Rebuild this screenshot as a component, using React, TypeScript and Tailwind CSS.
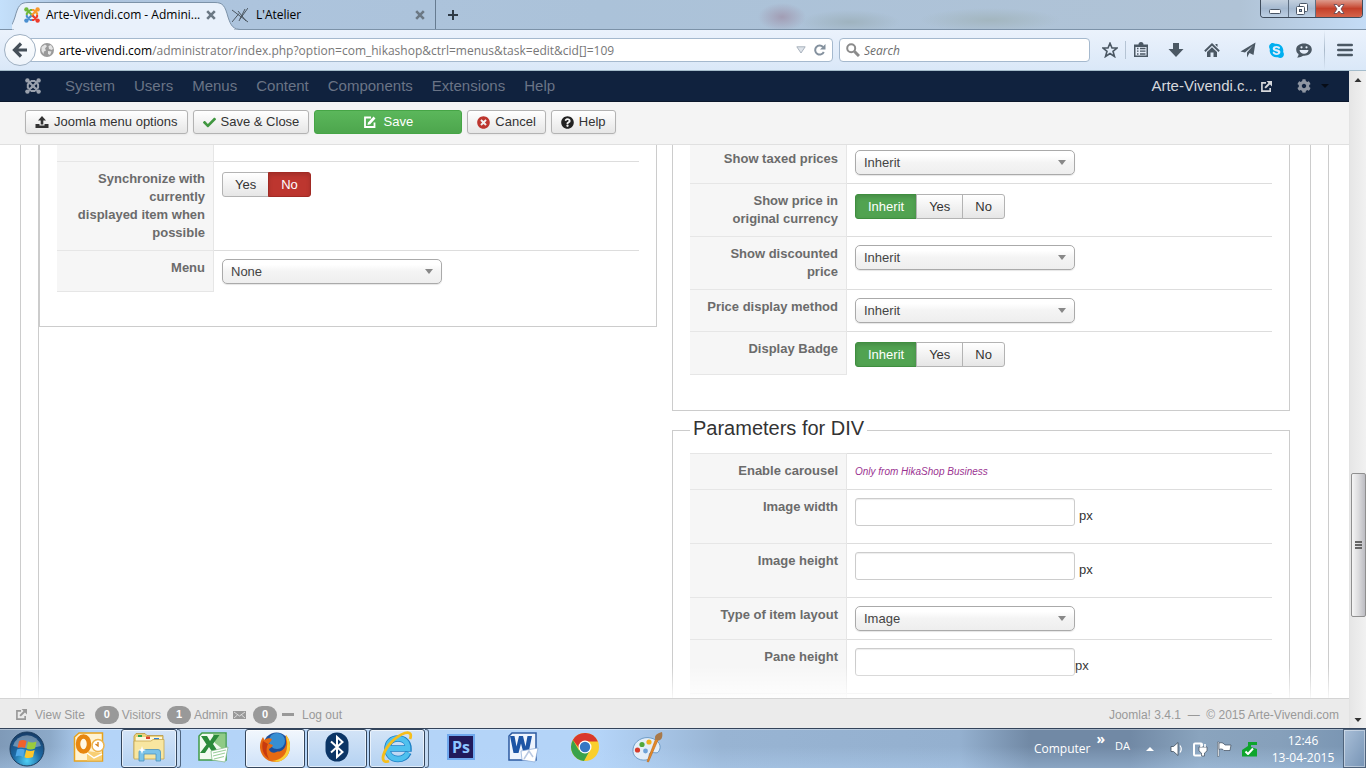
import { useId, useState } from "react";
import type { ReactNode } from "react";
import { FaCheck, FaCog, FaQuestionCircle, FaSkype, FaTimesCircle } from "react-icons/fa";

const menuItems = ["System", "Users", "Menus", "Content", "Components", "Extensions", "Help"];

export default function App() {
  return (
    <div className="flex h-screen flex-col overflow-hidden bg-white font-['Liberation_Sans',Arial,sans-serif] text-[13px] leading-[18px] text-[#333]">
      <TabStrip />
      <BrowserToolbar />
      <div className="flex min-h-0 flex-1">
        <div className="flex min-w-0 flex-1 flex-col">
          <AdminNav />
          <AdminToolbar />
          <MenuForm />
          <StatusBar />
        </div>
        <ScrollTrack />
      </div>
      <Taskbar />
    </div>
  );
}

/* ---------- browser ---------- */

function TabStrip() {
  return (
    <div className="relative flex h-[30px] shrink-0 items-end border-b border-[#7c92a8] bg-[radial-gradient(ellipse_24px_14px_at_782px_17px,#a29db4_0%,transparent_100%),radial-gradient(ellipse_50px_12px_at_850px_22px,#9fb3bf_0%,transparent_100%),radial-gradient(ellipse_70px_12px_at_990px_20px,#a3b6bf_0%,transparent_100%),linear-gradient(90deg,#c4e0fb_0px,#aec5df_70px,#abc2d9_600px,#b0c3d6_1240px,#c4dcf6_100%)] font-['Open_Sans','Noto_Sans',sans-serif] text-xs text-black">
      <div className="relative ml-3 flex h-[30px] w-[220px] items-center">
        <svg className="absolute -bottom-px left-0 h-[29px] w-[228px]" viewBox="0 0 228 29" fill="none">
          <path
            d="M-12 28.500C-2 28.500 0 25 3 16C6 5 8 1.500 16 1.500H203C211 1.500 213 5 216 16C219 25 221 28.500 230 28.500"
            fill="#e9f1fb"
            stroke="#7c92a8"
          />
          <path d="M2 28.500H222" stroke="#e9f1fb" strokeWidth="2" />
        </svg>
        <div className="relative flex w-full items-center pt-0.5 pr-3 pl-3">
          <JoomlaMark />
          <span className="ml-1.5 flex-1 whitespace-nowrap">Arte-Vivendi.com - Admini...</span>
          <button aria-label="Close tab Arte-Vivendi.com" className="mr-1">
            <CloseX />
          </button>
        </div>
      </div>
      <div className="flex h-[30px] w-[204px] items-center border-r border-[#667b90] pt-0.5 pr-2.5">
        <svg className="h-4 w-4" viewBox="0 0 16 16" fill="none" stroke="#4b5660" strokeWidth="1">
          <path d="M0 3L8 9L16 15M0 15L7 6.500M6 4L14 14M8 12L16 1M13 2L7 14" />
        </svg>
        <span className="ml-2 flex-1">L'Atelier</span>
        <button aria-label="Close tab L'Atelier">
          <CloseX />
        </button>
      </div>
      <button aria-label="New tab" className="flex h-[30px] w-[34px] items-center justify-center pt-0.5">
        <svg className="h-3 w-3" viewBox="0 0 12 12" stroke="#2e3a46" strokeWidth="2">
          <path d="M6 1V11M1 6H11" />
        </svg>
      </button>

      <div className="absolute top-0 right-[3px] flex h-[18px] overflow-hidden rounded-b border border-t-0 border-[#3f4c5c]">
        <button aria-label="Minimize" className="flex w-7 items-center justify-center border-r border-[#5f6f82] bg-linear-to-b from-[#c3d0de] via-[#a5b9d0] to-[#bdd0e4]">
          <svg className="h-3 w-3" viewBox="0 0 12 12">
            <rect x="0.500" y="6.500" width="11" height="4" rx="1" fill="#fff" stroke="#4a5666" />
          </svg>
        </button>
        <button aria-label="Restore" className="flex w-[27px] items-center justify-center border-r border-[#5f6f82] bg-linear-to-b from-[#c3d0de] via-[#a5b9d0] to-[#bdd0e4]">
          <svg className="h-3 w-3" viewBox="0 0 12 12" fill="#fff" stroke="#4a5666">
            <rect x="3.500" y="0.500" width="8" height="8" rx="1" />
            <rect x="0.500" y="3.500" width="8" height="8" rx="1" />
            <rect x="3.500" y="6.500" width="2" height="2" fill="#a5b9d0" />
          </svg>
        </button>
        <button aria-label="Close" className="flex w-[46px] items-center justify-center bg-linear-to-b from-[#dd9a8c] via-[#c4402a] to-[#d5634a]">
          <svg className="h-3 w-3" viewBox="0 0 12 12">
            <path d="M1 1.500H4L6 4L8 1.500H11L8 6L11 10.500H8L6 8L4 10.500H1L4 6Z" fill="#fff" stroke="#5a4350" strokeWidth="0.800" />
          </svg>
        </button>
      </div>
    </div>
  );
}

function CloseX() {
  return (
    <svg className="h-2.5 w-2.5" viewBox="0 0 10 10" stroke="#6b7884" strokeWidth="2.600">
      <path d="M1.200 1.200L8.800 8.800M8.800 1.200L1.200 8.800" />
    </svg>
  );
}

function JoomlaMark({ mono }: { mono?: boolean }) {
  const [green, orange, red, blue] = mono
    ? ["currentColor", "currentColor", "currentColor", "currentColor"]
    : ["#6fb83a", "#f8982a", "#ee3b2a", "#4a8fd0"];
  return (
    <svg className="h-4 w-4 shrink-0" viewBox="0 0 16 16" fill="none" strokeWidth="2">
      <path d="M2.500 2.500L10 10M2.800 8V6.500L6.500 2.900H8" stroke={green} />
      <path d="M13.500 2.500L6 10M8 2.900H9.500L13.100 6.500V8" stroke={orange} />
      <path d="M13.500 13.500L8.500 8.500M13.100 8V9.500L9.500 13.100H8" stroke={red} />
      <path d="M2.500 13.500L7.500 8.500M8 13.100H6.500L2.800 9.500V8" stroke={blue} />
      <circle cx="2.400" cy="2.400" r="2.200" fill={green} />
      <circle cx="13.600" cy="2.400" r="2.200" fill={orange} />
      <circle cx="13.600" cy="13.600" r="2.200" fill={red} />
      <circle cx="2.400" cy="13.600" r="2.200" fill={blue} />
    </svg>
  );
}

function BrowserToolbar() {
  return (
    <div className="flex h-[41px] shrink-0 items-center border-b border-[#a4bccb] bg-linear-to-b from-[#ebf2fc] to-[#dae8f8] pl-1 font-['Open_Sans','Noto_Sans',sans-serif] text-xs">
      <button aria-label="Back" className="z-10 flex h-8 w-8 shrink-0 items-center justify-center rounded-full border border-[#9fb0c2] bg-linear-to-b from-white to-[#edf3fa]">
        <svg className="h-4 w-4" viewBox="0 0 16 16" fill="none" stroke="#454f59" strokeWidth="3.200">
          <path d="M9 1.500L2.500 8L9 14.500M3 8H15" />
        </svg>
      </button>
      <div className="-ml-1.5 flex h-6 flex-1 items-center rounded-r-sm border border-[#a5b9ce] bg-white pr-1.5 pl-[9px]">
        <svg className="h-3.5 w-3.5 shrink-0" viewBox="0 0 14 14">
          <circle cx="7" cy="7" r="7" fill="#9a9a9a" />
          <path d="M1.500 4L5 1.500L7 3L5 5.500L6 7.500L4 8.500L3.500 11L1.500 8ZM8.500 3L11 2L13 5.500L12 7L9 6ZM8 8L11.500 8.500L10 12L8 11Z" fill="#e4e4e4" />
        </svg>
        <div className="ml-[5px] flex-1 pt-0.5 leading-5 whitespace-nowrap">
          <span className="text-black">arte-vivendi.com</span>
          <span className="text-[#777]">/administrator/index.php?option=com_hikashop&amp;ctrl=menus&amp;task=edit&amp;cid[]=109</span>
        </div>
        <svg className="h-2 w-2.5" viewBox="0 0 10 8">
          <path d="M0.800 0.800H9.200L5 7Z" fill="#dfe4ea" stroke="#a9b2bd" />
        </svg>
        <button aria-label="Reload" className="ml-2">
          <svg className="h-3 w-3" viewBox="0 0 12 12" fill="none" stroke="#84919e" strokeWidth="2">
            <path d="M9.800 8A4.500 4.500 0 1 1 9 3" />
            <path d="M11.500 0V5.500H6Z" fill="#84919e" stroke="none" />
          </svg>
        </button>
      </div>
      <label className="ml-1.5 flex h-6 w-[251px] shrink-0 items-center rounded-sm border border-[#a5b9ce] bg-white pl-1.5">
        <svg className="h-3.5 w-3.5" viewBox="0 0 14 14" fill="none" stroke="#8b8b8b">
          <circle cx="5.200" cy="5.200" r="4" strokeWidth="2" />
          <path d="M8.500 8.500L13 13" strokeWidth="3" />
        </svg>
        <input aria-label="Search" placeholder="Search" className="ml-1 min-w-0 flex-1 pt-0.5 italic outline-none placeholder:text-[#6d6d6d]" />
      </label>
      <div className="flex h-full shrink-0 items-center pr-px text-[#4b5864]">
        <ToolbarButton label="Bookmark" className="ml-3">
          <path d="M8 1.200L10 6H15L11 9.300L12.500 14.500L8 11.500L3.500 14.500L5 9.300L1 6H6Z" fill="none" stroke="currentColor" strokeWidth="1.600" />
        </ToolbarButton>
        <div className="ml-[7px] h-[18px] w-px bg-[#b5c4d4]" />
        <ToolbarButton label="Bookmarks list" className="ml-[7px]">
          <path d="M5.500 2.500A2.500 2.500 0 0 1 10.500 2.500H15V15H1V2.500Z" />
          <path d="M2.500 5H13.500V13.500H2.500Z" fill="#e6eefa" />
          <path d="M4 6.500H5.500M7 6.500H12.500M4 9.200H5.500M7 9.200H12.500M4 12H5.500M7 12H12.500" stroke="currentColor" strokeWidth="1.300" />
        </ToolbarButton>
        <ToolbarButton label="Downloads" className="ml-[19px]">
          <path d="M5 1H11V7H15.500L8 15L0.500 7H5Z" />
        </ToolbarButton>
        <ToolbarButton label="Home" className="ml-5">
          <path d="M8 1L15.800 8.500L14.500 9.900L8 3.800L1.500 9.900L0.200 8.500ZM8 5.300L13 10V15H9.500V10.500H6.500V15H3V10ZM11.500 2H13.500V5L11.500 3Z" />
        </ToolbarButton>
        <ToolbarButton label="Share page" className="ml-5">
          <path d="M15.500 0.500L13.500 13L9.500 11L7 15.500V10.500L13 3.500L5 10.500L0.500 9.500Z" />
        </ToolbarButton>
        <button aria-label="Skype" className="ml-3 text-[#00aff0]">
          <FaSkype size={17} />
        </button>
        <ToolbarButton label="Hello" className="ml-[11px]">
          <path d="M8 1.500C12.500 1.500 15.800 4 15.800 7.500S12.500 13.700 8.500 13.700C6 13.700 5 15.500 1 15.500C2.500 14 2.500 13 2.500 12C1 11 0.200 9.500 0.200 7.500C0.200 4 3.500 1.500 8 1.500Z" />
          <path d="M3.500 8H12.500C12 10.500 10.500 11.700 8 11.700S4 10.500 3.500 8Z" fill="#e6eefa" />
          <circle cx="5.500" cy="5.300" r="1.100" fill="#e6eefa" />
          <circle cx="10.500" cy="5.300" r="1.100" fill="#e6eefa" />
        </ToolbarButton>
        <div className="ml-3 h-full w-px bg-linear-to-b from-transparent via-[#a9b9ca] to-transparent" />
        <button aria-label="Open menu" className="mr-3 ml-3">
          <svg className="h-4 w-4" viewBox="0 0 16 16" stroke="currentColor" strokeWidth="2.400" strokeLinecap="round">
            <path d="M1.200 3H14.800M1.200 8H14.800M1.200 13H14.800" />
          </svg>
        </button>
      </div>
    </div>
  );
}

function ToolbarButton({ label, className, children }: { label: string; className: string; children: ReactNode }) {
  return (
    <button aria-label={label} className={className}>
      <svg className="h-4 w-4" viewBox="0 0 16 16" fill="currentColor">
        {children}
      </svg>
    </button>
  );
}

function ScrollTrack() {
  return (
    <div className="flex w-[17px] shrink-0 flex-col items-center border-l border-[#e3e3e3] bg-linear-to-r from-[#e6e6e6] to-[#f1f1f1]">
      <div className="flex h-[17px] items-center">
        <svg className="h-1 w-2" viewBox="0 0 8 4">
          <path d="M4 0L7.500 4H0.500Z" fill="#333" />
        </svg>
      </div>
      <div className="flex-[385]" />
      <div className="flex min-h-[144px] w-[15px] flex-col items-center justify-center gap-px rounded-xs border border-[#8f8f8f] bg-linear-to-r from-[#f5f5f5] via-[#dcdcde] to-[#bcbcc2]">
        <span className="h-0.5 w-[7px] bg-[#666]" />
        <span className="h-0.5 w-[7px] bg-[#666]" />
        <span className="h-0.5 w-[7px] bg-[#666]" />
      </div>
      <div className="flex-[94]" />
      <div className="flex h-[17px] items-center">
        <svg className="h-1 w-2" viewBox="0 0 8 4">
          <path d="M4 4L7.500 0H0.500Z" fill="#333" />
        </svg>
      </div>
    </div>
  );
}

/* ---------- admin page ---------- */

function AdminNav() {
  return (
    <nav className="flex h-[31px] shrink-0 items-center border-b border-[#0b172c] bg-[#10223e] pl-[25px] text-[15px] text-[#6a7486]">
      <a href="#" aria-label="Control panel" className="text-[#9aa1ad]">
        <JoomlaMark mono />
      </a>
      <ul className="ml-[15px] flex gap-px">
        {menuItems.map((item) => (
          <li key={item}>
            <a href="#" className="px-[9px]">
              {item}
            </a>
          </li>
        ))}
      </ul>
      <a href="#" className="ml-auto flex items-center text-[#d6d8dc]">
        Arte-Vivendi.c...
        <OutIcon className="ml-1 h-[11px] w-[11px]" />
      </a>
      <button aria-label="Settings" className="mr-5 ml-[25px] flex items-center">
        <FaCog size={14} className="text-[#8f96a2]" />
        <span className="ml-2.5 border-x-4 border-t-4 border-x-transparent border-t-[#060c17]" />
      </button>
    </nav>
  );
}

function OutIcon({ className }: { className: string }) {
  return (
    <svg className={className} viewBox="0 0 12 12" fill="none" stroke="currentColor" strokeWidth="1.800">
      <path d="M5.500 2H1V11H10V7.500" />
      <path d="M4.500 7.500L9.500 2.500" strokeWidth="2.200" />
      <path d="M6 0H12V6Z" fill="currentColor" stroke="none" />
    </svg>
  );
}

const toolbarButton =
  "flex h-6 items-center justify-center gap-[5px] rounded-[3px] border border-[#b3b3b3] bg-linear-to-b from-white to-[#e6e6e6] px-[9px] shadow-[0_1px_2px_rgba(0,0,0,0.05)]";

function AdminToolbar() {
  return (
    <div className="flex h-[43px] shrink-0 items-start gap-[5px] border-b border-[#e0e0e0] bg-[#f4f4f4] pt-2 pl-[25px]">
      <button className={toolbarButton}>
        <svg className="h-3.5 w-3.5" viewBox="0 0 14 14" fill="#333">
          <path d="M7 1L11 5.500H8.300V9.500H5.700V5.500H3ZM0.500 9H4.500V10.500H9.500V9H13.500V13H0.500Z" />
        </svg>
        Joomla menu options
      </button>
      <button className={toolbarButton}>
        <FaCheck size={13} className="text-[#409740]" />
        Save &amp; Close
      </button>
      <button className="flex h-6 w-[148px] items-center justify-center gap-2 rounded-[3px] border border-[#46a546] bg-linear-to-b from-[#5bb75b] to-[#4da64d] text-white">
        <svg className="h-3 w-3" viewBox="0 0 12 12" fill="none" stroke="currentColor" strokeWidth="1.800">
          <path d="M7 1.500H1V11H10.500V6.500" />
          <path d="M5 7.500L10.500 1.500" strokeWidth="2.600" />
          <path d="M3.500 9L4 6L6.500 8Z" fill="currentColor" stroke="none" />
        </svg>
        Save
      </button>
      <button className={toolbarButton}>
        <FaTimesCircle size={13} className="text-[#bd362f]" />
        Cancel
      </button>
      <button className={toolbarButton}>
        <FaQuestionCircle size={13} className="text-[#222]" />
        Help
      </button>
    </div>
  );
}

function MenuForm() {
  return (
    <main className="relative flex min-h-0 flex-1 overflow-hidden px-5">
      <div className="flex flex-1 border-x border-[#ccc] px-[17px]">
        <div className="-mt-1 grid flex-1 grid-cols-2 items-start gap-[15px] border-x border-[#ccc] pr-5">
          <div className="border border-t-0 border-[#ccc] px-[17px] pb-[34px]">
            <ParamTable>
              <tr className="h-5">
                <th className={labelCell} />
                <td />
              </tr>
              <ToggleRow label={"Synchronize with currently\ndisplayed item when possible"} options={["Yes", "No"]} initial="No" />
              <SelectRow label="Menu" value="None" />
            </ParamTable>
          </div>
          <div>
            <div className="border border-t-0 border-[#ccc] px-[17px] pb-[35px]">
              <ParamTable>
                <SelectRow label="Show taxed prices" value="Inherit" />
                <ToggleRow label="Show price in original currency" options={["Inherit", "Yes", "No"]} initial="Inherit" />
                <SelectRow label="Show discounted price" value="Inherit" />
                <SelectRow label="Price display method" value="Inherit" />
                <ToggleRow label="Display Badge" options={["Inherit", "Yes", "No"]} initial="Inherit" />
              </ParamTable>
            </div>
            <fieldset className="mt-1.5 border border-[#ccc] px-[17px] pb-[35px]">
              <legend className="px-[3px] pb-1 text-xl leading-[22px]">Parameters for DIV</legend>
              <div className="pt-2.5">
                <ParamTable>
                  <Row label="Enable carousel">
                    <span className="block h-[19px] pt-px text-[10px] text-[#9b3391] italic">Only from HikaShop Business</span>
                  </Row>
                  <InputRow label="Image width" spaced />
                  <InputRow label="Image height" spaced />
                  <SelectRow label="Type of item layout" value="Image" />
                  <InputRow label="Pane height" />
                  <tr className="h-8">
                    <th className={labelCell} />
                    <td className="border-t border-[#ddd]" />
                  </tr>
                </ParamTable>
              </div>
            </fieldset>
          </div>
        </div>
      </div>
      <div className="pointer-events-none absolute inset-x-0 bottom-0 h-8 bg-linear-to-b from-white/0 to-white/85" />
    </main>
  );
}

const labelCell =
  "w-[157px] border-t border-r border-[#e6e6e6] bg-[#f6f6f6] py-2 pr-2 pl-[15px] text-right align-top font-bold whitespace-pre-line text-[#6b6b6b]";

function ParamTable({ children }: { children: ReactNode }) {
  return (
    <table className="w-full table-fixed border-separate border-spacing-0 [&_tr:last-child>th]:border-b">
      <colgroup>
        <col className="w-[157px]" />
        <col />
      </colgroup>
      <tbody>{children}</tbody>
    </table>
  );
}

function Row({ label, htmlFor, children }: { label: string; htmlFor?: string; children: ReactNode }) {
  return (
    <tr>
      <th className={labelCell}>
        <label htmlFor={htmlFor}>{label}</label>
      </th>
      <td className="border-t border-[#ddd] px-2 py-2 align-top">{children}</td>
    </tr>
  );
}

function SelectRow({ label, value }: { label: string; value: string }) {
  const id = useId();
  return (
    <Row label={label} htmlFor={id}>
      <div className="relative w-[220px]">
        <select
          id={id}
          className="block h-[25px] w-full appearance-none rounded-[5px] border border-[#aaa] bg-linear-to-b from-white from-20% via-[#f4f4f4] via-50% to-[#eee] px-2 text-[13px] text-[#444] shadow-[0_1px_1px_rgba(0,0,0,0.1)]"
        >
          <option>{value}</option>
        </select>
        <span className="pointer-events-none absolute top-2.5 right-[9px] border-x-4 border-t-[5px] border-x-transparent border-t-[#888]" />
      </div>
    </Row>
  );
}

function InputRow({ label, spaced }: { label: string; spaced?: boolean }) {
  const id = useId();
  return (
    <Row label={label} htmlFor={id}>
      <div className={`flex h-[37px] items-start ${spaced ? "gap-1" : ""}`}>
        <input
          id={id}
          type="text"
          className="h-7 w-[220px] rounded-[3px] border border-[#ccc] bg-white px-1.5 shadow-[inset_0_1px_1px_rgba(0,0,0,0.075)]"
        />
        <span className="pt-[9px]">px</span>
      </div>
    </Row>
  );
}

function ToggleRow({ label, options, initial }: { label: string; options: string[]; initial: string }) {
  const name = useId();
  const [selected, setSelected] = useState(initial);

  function optionStyle(option: string) {
    if (option !== selected) return "border-[#b3b3b3] bg-linear-to-b from-white to-[#e6e6e6]";
    if (option === "No") return "border-[#a12a24] bg-[#bd362f] text-white shadow-[inset_0_2px_4px_rgba(0,0,0,0.15)]";
    return "border-[#3f8e3f] bg-[#51a351] text-white shadow-[inset_0_2px_4px_rgba(0,0,0,0.15)]";
  }

  return (
    <Row label={label}>
      <div role="radiogroup" aria-label={label} className="flex pt-0.5">
        {options.map((option) => (
          <label
            key={option}
            className={`relative -ml-px flex h-[25px] items-center border px-3 first:ml-0 first:rounded-l-[3px] last:rounded-r-[3px] ${optionStyle(option)}`}
          >
            <input
              type="radio"
              name={name}
              className="sr-only"
              checked={option === selected}
              onChange={() => setSelected(option)}
            />
            {option}
          </label>
        ))}
      </div>
    </Row>
  );
}

function StatusBar() {
  return (
    <footer className="flex h-[30px] shrink-0 items-center border-t border-[#d4d4d4] bg-[#ebebeb] pt-0.5 pr-[10px] pl-4 text-xs text-[#999]">
      <OutIcon className="h-[11px] w-[11px]" />
      <a href="#" className="ml-2">
        View Site
      </a>
      <Badge className="ml-2.5">0</Badge>
      <span className="ml-[3px]">Visitors</span>
      <Badge className="ml-1.5">1</Badge>
      <span className="ml-[3px]">Admin</span>
      <svg className="ml-[5px] h-2 w-[13px]" viewBox="0 0 13 8">
        <rect width="13" height="8" fill="currentColor" />
        <path d="M1 1L6.500 5L12 1M1 7L4.500 4M12 7L8.500 4" fill="none" stroke="#ebebeb" strokeWidth="0.800" />
      </svg>
      <Badge className="ml-[7px]">0</Badge>
      <span className="ml-[5px] h-[3px] w-3 bg-[#999]" />
      <a href="#" className="ml-2">
        Log out
      </a>
      <span className="ml-auto">Joomla! 3.4.1 &nbsp;—&nbsp; © 2015 Arte-Vivendi.com</span>
    </footer>
  );
}

function Badge({ className, children }: { className: string; children: ReactNode }) {
  return (
    <span className={`flex h-[18px] w-6 items-center justify-center rounded-full bg-[#999] text-[11px] font-bold text-white ${className}`}>
      {children}
    </span>
  );
}

/* ---------- desktop taskbar ---------- */

function Taskbar() {
  return (
    <div className="flex h-10 shrink-0 items-center border-t border-[#33435a] bg-[linear-gradient(180deg,transparent_45%,rgba(184,216,250,0.35)_100%),linear-gradient(90deg,#7f9ab8_0px,#8ca9c8_50px,#b4d4f8_90px,#b4d4f8_600px,#98b4d3_720px,#94b0cf_960px,#7189a5_1030px,#7189a5_1130px,#8aa4be_1200px,#86a0bb_1280px,#7793b1_100%)] font-['Open_Sans','Noto_Sans',sans-serif] text-xs text-white shadow-[inset_0_1px_0_rgba(255,255,255,0.35)]">
      <button aria-label="Start" className="ml-[9px] shrink-0">
        <StartOrb />
      </button>
      <div className="ml-[13px] flex h-full items-center">
        <TaskSlot label="Outlook">
          <OutlookIcon />
        </TaskSlot>
        <TaskSlot label="Windows Explorer" open stacked>
          <ExplorerIcon />
        </TaskSlot>
        <TaskSlot label="Excel">
          <ExcelIcon />
        </TaskSlot>
        <TaskSlot label="Firefox" open active>
          <FirefoxIcon />
        </TaskSlot>
        <TaskSlot label="Bluetooth" open>
          <BluetoothIcon />
        </TaskSlot>
        <TaskSlot label="Internet Explorer" open stacked>
          <IeIcon />
        </TaskSlot>
        <TaskSlot label="Photoshop">
          <span className="flex h-[26px] w-7 items-center justify-center border-2 border-[#6fa8ee] bg-[#211a5c] text-base font-bold text-[#8ec5ff]">
            Ps
          </span>
        </TaskSlot>
        <TaskSlot label="Word">
          <WordIcon />
        </TaskSlot>
        <TaskSlot label="Chrome">
          <ChromeIcon />
        </TaskSlot>
        <TaskSlot label="Paint">
          <PaintIcon />
        </TaskSlot>
      </div>
      <div className="ml-auto flex h-full shrink-0 items-center">
        <span>Computer</span>
        <span className="mb-5 ml-1.5 text-sm leading-none font-bold">»</span>
        <span className="mb-1 ml-2.5 text-[11px]">DA</span>
        <span className="ml-4 border-x-4 border-b-4 border-x-transparent border-b-white" />
        <svg className="ml-4 h-4 w-[90px]" viewBox="0 0 90 16" strokeLinejoin="round">
          <path d="M1 5.500H3.500L8 1.500V14.500L3.500 10.500H1Z" fill="#fff" stroke="#3d4c5c" strokeWidth="0.800" />
          <path d="M10 4.500Q12.500 8 10 11.500" fill="none" stroke="#fff" strokeWidth="1.200" />
          <rect x="24" y="2.500" width="8" height="12" rx="1" fill="none" stroke="#fff" strokeWidth="2" />
          <path d="M29 6H37V10L34.500 12V15H31.500V12L29 10Z" fill="#fff" stroke="#3d4c5c" strokeWidth="0.700" />
          <path d="M31 3V6M35 3V6" stroke="#fff" strokeWidth="1.600" />
          <path d="M47.500 1H49V15.500H47.500Z" fill="#fff" stroke="#3d4c5c" strokeWidth="0.500" />
          <path d="M49 2C52 1 54 2.500 55 4H61L60 9.500H54C53 8 51 7.500 49 8.500Z" fill="#fff" stroke="#3d4c5c" strokeWidth="0.700" />
          <path d="M72 9L78 5V1H87V4H81V6L87 8V15.500H72Z" fill="#0ea52c" />
          <path d="M75.500 10.500L78 13L83 7.500" fill="none" stroke="#fff" strokeWidth="2" />
        </svg>
        <div className="ml-1 w-[78px] text-center leading-[17px]">
          <div>12:46</div>
          <div>13-04-2015</div>
        </div>
        <button aria-label="Show desktop" className="ml-px h-full w-[23px] border border-[#4f637b] bg-linear-to-br from-[#a9bfd8] to-[#7794b5] shadow-[inset_0_0_0_1px_rgba(255,255,255,0.4)]" />
      </div>
    </div>
  );
}

function TaskSlot({
  label,
  open,
  active,
  stacked,
  children
}: {
  label: string;
  open?: boolean;
  active?: boolean;
  stacked?: boolean;
  children: ReactNode;
}) {
  const frame = open
    ? active
      ? "border-[#34465c] bg-linear-to-b from-[#f2f7fd] to-[#cfe2f8]"
      : "border-[#34465c] bg-linear-to-b from-[#d3e4f7] to-[#b5d2f2]"
    : "border-transparent";
  return (
    <div className="flex h-full w-[62px] px-px">
      <button
        aria-label={label}
        className={`flex h-full flex-1 items-center justify-center rounded-[3px] border pb-[3px] ${frame} ${open ? "shadow-[inset_0_0_0_1px_rgba(255,255,255,0.6)]" : ""}`}
      >
        {children}
      </button>
      {stacked && <span className="w-1 rounded-r-[3px] border-y border-r border-[#4f6681] bg-[#c3daf3]" />}
    </div>
  );
}

function StartOrb() {
  return (
    <svg className="h-9 w-9" viewBox="0 0 36 36">
      <defs>
        <radialGradient id="orb" cx="50%" cy="85%" r="80%">
          <stop offset="0" stopColor="#4fd0f5" />
          <stop offset="0.500" stopColor="#1d6aa5" />
          <stop offset="1" stopColor="#173f6b" />
        </radialGradient>
      </defs>
      <circle cx="18" cy="18" r="17" fill="url(#orb)" stroke="#1c3d5e" />
      <path d="M4 15A14.500 14.500 0 0 1 32 15Q18 19 4 15Z" fill="#fff" opacity="0.350" />
      <path d="M10 10Q14 8 17.500 10L16 17Q12.500 15.500 8.500 17Z" fill="#f0622c" />
      <path d="M19 10.500Q23 12.500 27.500 10.500L26 17.500Q21.500 19.500 17.500 17.500Z" fill="#9bcb3c" />
      <path d="M8 18.500Q12 17 15.700 18.800L14 26Q10.500 24 6.500 25.500Z" fill="#4fa8e8" />
      <path d="M17.200 19Q21.500 21 25.600 19L24 26Q19.500 28 15.500 26.200Z" fill="#fcc62c" />
    </svg>
  );
}

function OutlookIcon() {
  return (
    <svg className="h-8 w-8" viewBox="0 0 32 32">
      <path d="M6 2H29.500V30H1.500V6Z" fill="#fff3d2" stroke="#e8a21c" strokeWidth="1.500" />
      <path d="M14 20L29 22V29.500H14Z" fill="#f8cf74" />
      <ellipse cx="10.500" cy="13" rx="5.500" ry="7.500" fill="#fff8e6" stroke="#e78610" strokeWidth="4.500" />
      <circle cx="25" cy="14.500" r="6" fill="#fff" stroke="#eeb44c" strokeWidth="1.500" />
      <path d="M25 11V15L22.500 13" fill="none" stroke="#d47b10" strokeWidth="1.300" />
      <path d="M14 22L21 27L29 23" fill="none" stroke="#fff" strokeWidth="1.500" />
    </svg>
  );
}

function ExplorerIcon() {
  return (
    <svg className="h-[30px] w-8" viewBox="0 0 32 30">
      <path d="M1 4L3 1.500H12L14 3.500H30V26H1Z" fill="#ecd27b" stroke="#b9963d" strokeWidth="0.800" />
      <path d="M3 5H29V12H3Z" fill="#fdf7d8" />
      <path d="M5 3H9V5H5Z" fill="#2ca34a" />
      <path d="M13 4.500H17V7H13Z" fill="#d9442f" />
      <path d="M21 6H26V8H21Z" fill="#2f7fd2" />
      <path d="M1 9H18L20 7.500H31V27H1Z" fill="#f8e6a0" stroke="#c5a64e" strokeWidth="0.800" />
      <path d="M6 29V20Q6 17.500 8.500 17.500H25Q27.500 17.500 27.500 20V29H23V22H11V29Z" fill="#7cc3e8" stroke="#4d93bd" strokeWidth="0.800" />
      <path d="M9 14L10 17L13 18L10 19L9 22L8 19L5 18L8 17Z" fill="#fff" />
    </svg>
  );
}

function ExcelIcon() {
  return (
    <svg className="h-8 w-8" viewBox="0 0 32 32">
      <path d="M5 2H29V29H2V5Z" fill="#f2faf0" stroke="#3f9b47" strokeWidth="1.500" />
      <path d="M16 3H28V20L18 12Z" fill="#8fcb86" />
      <path d="M4 5H10L13 10L17 4H22.500L16 13L22 22H16L12 16L8 22H3L9.500 13.500Z" fill="#2b8a3a" />
      <path d="M14 20L31 16L28 31L15 29Z" fill="#fff" stroke="#7fb782" strokeWidth="0.700" />
      <path d="M16 22L29 19M16 25L28 22M17 28L27 25.500" stroke="#9ccf9c" strokeWidth="1.200" />
    </svg>
  );
}

function FirefoxIcon() {
  return (
    <svg className="h-8 w-8" viewBox="0 0 32 32">
      <circle cx="17.500" cy="14.500" r="13" fill="#1c4f9c" />
      <circle cx="18" cy="10" r="8" fill="#3f9de0" opacity="0.800" />
      <path d="M27 4C33 11 32 22 26 27C20 33 9 32 4 25C-1 18 1 10 4 6L5.500 9C8 7 11 7 13 8C12 10 11 11.500 9.500 12.500L14 14C13 17 10.500 17 10 18.500C11.500 22 16 22.500 18.500 20.500C22 21 26 18 27 13C27.500 9 26 6 27 4Z" fill="#e66a12" />
      <path d="M27 4C33 11 32 22 26 27C22 31 17 31.500 13 30C22 29 28 24 28 15C29 11 27 8 27 4Z" fill="#fbcf34" />
      <path d="M4 10C2 17 4 24 10 28C7 22 7 17 9 13Z" fill="#c83a0f" />
    </svg>
  );
}

function BluetoothIcon() {
  return (
    <svg className="h-[30px] w-6" viewBox="0 0 24 30">
      <rect x="0.500" y="0.500" width="23" height="29" rx="11.500" fill="#0b3566" />
      <path d="M6 9.500L17.500 20L12 25V5L17.500 10L6 20.500" fill="none" stroke="#fff" strokeWidth="2" />
    </svg>
  );
}

function IeIcon() {
  return (
    <svg className="h-8 w-8" viewBox="0 0 32 32" fill="none">
      <path d="M27.500 21.500C25.500 25.500 22 28 17 28C10.500 28 6.500 23.500 6.500 17.500C6.500 11.500 10.500 7.500 17 7.500C23.500 7.500 27.500 11.500 27.500 17.500H9" stroke="#1d7fc4" strokeWidth="6.500" />
      <path d="M27 21.500C25.500 25 22 28 17 28C10.500 28 6.500 23.500 6.500 17.500C6.500 11.500 10.500 7.500 17 7.500C23 7.500 27 11.500 27 17.500H9" stroke="#4fc0ee" strokeWidth="4.800" />
      <path d="M8 30C3 32 1 29 2.500 24C5 15 15 5 24 2C29 0.500 31 3 29 8" stroke="#f5be1c" strokeWidth="2.800" />
    </svg>
  );
}

function WordIcon() {
  return (
    <svg className="h-8 w-8" viewBox="0 0 32 32">
      <path d="M5 2H29V29H2V5Z" fill="#eef4fd" stroke="#2c5aa0" strokeWidth="1.500" />
      <path d="M3 5L6.500 22H11.500L14 12.500L16.500 22H21.500L25 5H20.500L18.500 15.500L16 5H12L9.500 15.500L7.500 5Z" fill="#1d55a5" />
      <path d="M14 20L31 17L28 31L15 29Z" fill="#fff" stroke="#8aa9d6" strokeWidth="0.700" />
      <path d="M17 28L22 20L26 26" fill="none" stroke="#b9c9e2" strokeWidth="1.500" />
    </svg>
  );
}

function ChromeIcon() {
  return (
    <svg className="h-[30px] w-[30px]" viewBox="0 0 30 30">
      <circle cx="15" cy="15" r="14" fill="#f9cf2d" />
      <path d="M15 15L9 18.500L2.900 8A14 14 0 0 0 14 29L20 18Z" fill="#3aa24b" />
      <path d="M2.900 8A14 14 0 0 1 27.800 9.500H15L9 16Z" fill="#d9382c" />
      <circle cx="15" cy="15" r="6.500" fill="#fff" />
      <circle cx="15" cy="15" r="5.200" fill="#3577c4" />
    </svg>
  );
}

function PaintIcon() {
  return (
    <svg className="h-8 w-8" viewBox="0 0 32 32">
      <path d="M2 18C3 10 12 5 20 7C28 9 31 15 28 20C26 24 22 20 19 22C17 24 20 28 15 29C7 30 1 25 2 18Z" fill="#e3eef8" stroke="#6d9cc8" />
      <circle cx="6.500" cy="19" r="2.600" fill="#d63b2b" />
      <circle cx="11" cy="13.500" r="2.600" fill="#52a83a" />
      <circle cx="18" cy="11" r="2.600" fill="#f2b01e" />
      <circle cx="14.500" cy="20" r="2.400" fill="#6fa3d8" />
      <path d="M27.500 8L17.500 31L16 30.500L25 7Z" fill="#e58a27" stroke="#b8661a" strokeWidth="0.600" />
      <path d="M24.500 8.500C22.500 4 27 2 31 1C32 5 31 9 27.500 9.500Z" fill="#a8794b" />
    </svg>
  );
}
